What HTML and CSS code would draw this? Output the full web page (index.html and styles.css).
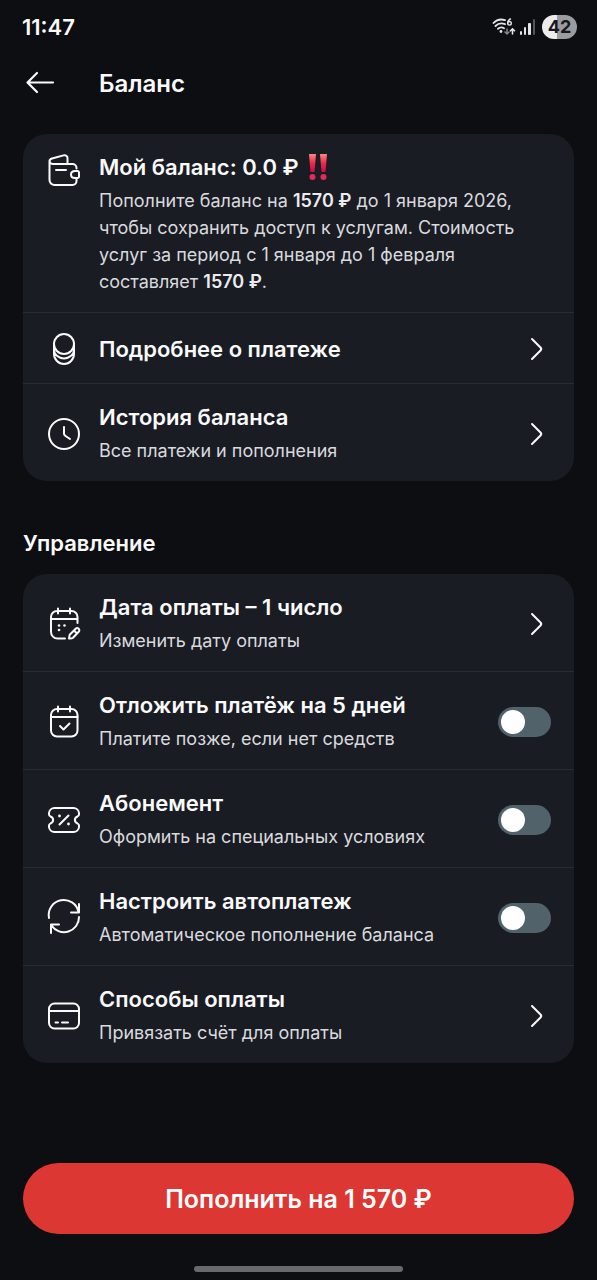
FILE: index.html
```html
<!DOCTYPE html>
<html lang="ru">
<head>
<meta charset="utf-8">
<meta name="viewport" content="width=device-width, initial-scale=1">
<title>Баланс</title>
<link rel="stylesheet" href="styles.css">
</head>
<body>
<div class="screen">
  <div class="status">
    <span class="clock">11:47</span>
    <div class="indicators">
      <svg width="24" height="20" viewBox="0 0 24 20" fill="none" stroke="#e4e5e9" stroke-linecap="round" aria-hidden="true">
        <path d="M1.500 6C4.500 2.800 9 1.800 13 3.200M3.500 9c2.500-2.500 6-3.200 9.500-1.800M6 11.800c1.800-1.500 4-1.700 6-.6" stroke-width="1.800"/>
        <circle cx="9" cy="14.500" r="1.400" fill="#e4e5e9" stroke="none"/>
        <path d="M18.500 2c-2 .6-2.800 2.200-2.800 4" stroke-width="1.400"/>
        <circle cx="17.500" cy="6.300" r="1.800" stroke-width="1.400"/>
        <path d="M15 12v5M13 15l2 2 2-2" stroke="#85868b" stroke-width="1.500"/>
        <path d="M20.500 17v-5M18.500 13.800l2-2 2 2" stroke-width="1.600"/>
      </svg>
      <svg width="18" height="18" viewBox="0 0 18 18" aria-hidden="true">
        <rect x="0" y="13" width="2" height="4" rx="1" fill="#e4e5e9"/>
        <rect x="4" y="9" width="2" height="8" rx="1" fill="#e4e5e9"/>
        <rect x="8" y="5" width="3" height="12" rx="1" fill="#e4e5e9"/>
        <rect x="13" y="1" width="2" height="16" rx="1" fill="#55565b"/>
      </svg>
      <span class="battery">42</span>
    </div>
  </div>

  <header class="appbar">
    <button class="back" type="button" aria-label="Назад">
      <svg width="30" height="24" viewBox="0 0 30 24" fill="none" stroke="#fafafb" stroke-width="2.200" stroke-linecap="round" stroke-linejoin="round"><path d="M28 11.500H3M12 2L2.500 11.500l9.500 9.500"/></svg>
    </button>
    <h1 class="title">Баланс</h1>
  </header>

  <main class="content">
    <section class="card" aria-label="Баланс">
      <div class="row row-top">
        <svg class="icon" viewBox="0 0 32 32"><path d="M28.500 14.500V14a4 4 0 0 0-4-4H5a3.500 3.500 0 0 1-3.500-3.500M1.500 7.500V26a5 5 0 0 0 5 5h18a4 4 0 0 0 4-4v-2.500M1.500 7.500c0-1.500.8-2.500 2.500-3L15.500 1.400c2.200-.6 4 .6 4 2.600V10M8 16h10M27 17h2.500a1.500 1.500 0 0 1 1.500 1.500v4a1.500 1.500 0 0 1-1.500 1.500H27c-2.500 0-4-1.500-4-3.500s1.500-3.500 4-3.500z"/></svg>
        <div class="text">
          <h2 class="name">Мой баланс: 0.0 ₽
            <svg class="alert" width="20" height="28" viewBox="0 0 20 28" role="img" aria-label="Важно">
              <defs><linearGradient id="red" x1="0" y1="0" x2="0" y2="1"><stop offset="0" stop-color="#ff8580"/><stop offset="0.500" stop-color="#e92c4c"/><stop offset="1" stop-color="#d1064b"/></linearGradient></defs>
              <path fill="url(#red)" d="M1 1h7L6.500 19h-4zM12 1h7l-1.500 18h-4z"/>
              <circle cx="4.500" cy="24" r="3" fill="#e62a5a"/><circle cx="15.500" cy="24" r="3" fill="#e62a5a"/>
            </svg>
          </h2>
          <p class="note">Пополните баланс на <b>1570 ₽</b> до 1 января 2026, чтобы сохранить доступ к услугам. Стоимость услуг за период с 1 января до 1 февраля составляет <b>1570 ₽</b>.</p>
        </div>
      </div>
      <a class="row" href="#payment">
        <svg class="icon" viewBox="0 0 32 32"><circle cx="16" cy="11" r="10"/><path d="M6 11v10a10 10 0 0 0 20 0V11M6 16.500a10 9 0 0 0 20 0"/></svg>
        <span class="text"><span class="name">Подробнее о платеже</span></span>
        <svg class="chevron" viewBox="0 0 14 24"><path d="M2 2l8.500 8.500c1 1 1 2 0 3L2 22"/></svg>
      </a>
      <a class="row" href="#history">
        <svg class="icon" viewBox="0 0 32 32"><circle cx="16" cy="16" r="15"/><path d="M16 9v6.500c0 1 .4 1.700 1.200 2.200L22 21"/></svg>
        <span class="text"><span class="name">История баланса</span><span class="note">Все платежи и пополнения</span></span>
        <svg class="chevron" viewBox="0 0 14 24"><path d="M2 2l8.500 8.500c1 1 1 2 0 3L2 22"/></svg>
      </a>
    </section>

    <h2 class="section">Управление</h2>

    <section class="card" aria-label="Управление">
      <a class="row" href="#date">
        <svg class="icon" viewBox="0 0 32 32"><path d="M29.500 15V9a6 6 0 0 0-6-6H9a6 6 0 0 0-6 6v15a6.500 6.500 0 0 0 6.500 6.500H17M3 11h26.500M10 .5v5M22 .5v5M21 30.500l.7-3.800 6-6a2.100 2.100 0 0 1 3 3l-5.700 6c-.8.7-2 .9-4 .8zM26 22.500l2.500 2.500"/><g class="dots"><circle cx="11" cy="17.500" r="1.300"/><circle cx="16.500" cy="17.500" r="1.300"/><circle cx="11" cy="22" r="1.300"/></g></svg>
        <span class="text"><span class="name">Дата оплаты – 1 число</span><span class="note">Изменить дату оплаты</span></span>
        <svg class="chevron" viewBox="0 0 14 24"><path d="M2 2l8.500 8.500c1 1 1 2 0 3L2 22"/></svg>
      </a>
      <label class="row">
        <svg class="icon" viewBox="0 0 32 32"><rect x="3" y="3" width="26.500" height="27.500" rx="6"/><path d="M3 11h26.500M10 .5v5M22 .5v5M12 20l3.500 3.500 6-6"/></svg>
        <span class="text"><span class="name">Отложить платёж на 5 дней</span><span class="note">Платите позже, если нет средств</span></span>
        <input class="switch" type="checkbox" role="switch">
      </label>
      <label class="row">
        <svg class="icon" viewBox="0 0 32 32"><path d="M6.500 4h19A5.500 5.500 0 0 1 31 9v1.500c0 1-.6 1.500-1.500 2-3.500 1.500-3.500 5.500 0 7 .9.500 1.500 1 1.500 2V23a5.500 5.500 0 0 1-5.500 5h-19A5.500 5.500 0 0 1 1 23v-1.500c0-1 .6-1.500 1.500-2 3.500-1.500 3.500-5.500 0-7C1.600 12 1 11.500 1 10.500V9a5.500 5.500 0 0 1 5.500-5zM11.500 20.500l9-9"/><g class="dots"><circle cx="11.500" cy="12" r="1.400"/><circle cx="20.500" cy="20" r="1.400"/></g></svg>
        <span class="text"><span class="name">Абонемент</span><span class="note">Оформить на специальных условиях</span></span>
        <input class="switch" type="checkbox" role="switch">
      </label>
      <label class="row">
        <svg class="icon" viewBox="0 0 32 32"><path d="M1 16A15 15 0 0 1 30.500 10M31 2v8.500h-8M31 15A15 15 0 0 1 3.500 23.500M3 31v-8.500h8"/></svg>
        <span class="text"><span class="name">Настроить автоплатеж</span><span class="note">Автоматическое пополнение баланса</span></span>
        <input class="switch" type="checkbox" role="switch">
      </label>
      <a class="row" href="#methods">
        <svg class="icon" viewBox="0 0 32 32"><rect x="1" y="3.500" width="30" height="25" rx="5.500"/><path d="M1 11h30M7.500 22.500h2.500M14 22.500h6"/></svg>
        <span class="text"><span class="name">Способы оплаты</span><span class="note">Привязать счёт для оплаты</span></span>
        <svg class="chevron" viewBox="0 0 14 24"><path d="M2 2l8.500 8.500c1 1 1 2 0 3L2 22"/></svg>
      </a>
    </section>
  </main>

  <footer class="bottom">
    <button class="pay" type="button">Пополнить на 1 570 ₽</button>
    <div class="handle"></div>
  </footer>
</div>
</body>
</html>
```
FILE: styles.css
```css
* { box-sizing: border-box; }

body {
  margin: 0;
  background: #0d0e12;
  color: #fafafb;
  font-family: Inter, "Noto Sans", sans-serif;
}

.screen {
  min-height: 100vh;
  display: flex;
  flex-direction: column;
}

h1, h2, p { margin: 0; }

.status {
  height: 54px;
  padding: 0 20px 0 22px;
  display: flex;
  align-items: center;
  justify-content: space-between;
}

.clock { font-size: 22px; font-weight: 600; }

.indicators { display: flex; align-items: center; gap: 4px; }

.battery {
  width: 35px;
  height: 24px;
  border-radius: 12px;
  background: linear-gradient(90deg, #ececee 42%, #9b9ca0 42%);
  color: #17181c;
  font-size: 18px;
  font-weight: 700;
  line-height: 24px;
  text-align: center;
}

.appbar {
  height: 58px;
  padding: 0 24px;
  display: flex;
  align-items: center;
  gap: 43px;
}

.back {
  width: 32px;
  height: 32px;
  padding: 0;
  border: 0;
  background: none;
  display: flex;
  align-items: center;
  justify-content: center;
}

.title { font-size: 24px; font-weight: 600; }

.content { padding: 22px 23px 0; }

.card {
  border-radius: 24px;
  background: #191c23;
  overflow: hidden;
}

.row {
  display: flex;
  align-items: center;
  gap: 19px;
  padding: 19px 23px 17px 25px;
  color: inherit;
  text-decoration: none;
}

.row + .row { border-top: 1px solid #272b32; }

.row-top { align-items: flex-start; }

.icon {
  width: 32px;
  height: 34px;
  flex: none;
  overflow: visible;
  fill: none;
  stroke: #fafafb;
  stroke-width: 2;
  stroke-linecap: round;
  stroke-linejoin: round;
}

.dots { fill: #fafafb; stroke: none; }

.text {
  flex: 1;
  min-width: 0;
  display: flex;
  flex-direction: column;
  gap: 6px;
}

.name { font-size: 22px; font-weight: 600; line-height: 28px; }

.alert { margin-left: 3px; vertical-align: middle; }

.row-top .name { display: flex; align-items: center; gap: 6px; }

.note { color: #d9dade; font-size: 18px; line-height: 27px; }

.note b { font-weight: 600; color: #ececef; }

.chevron {
  width: 14px;
  height: 24px;
  margin-right: 7px;
  flex: none;
  fill: none;
  stroke: #fafafb;
  stroke-width: 2;
  stroke-linecap: round;
}

.switch {
  appearance: none;
  width: 53px;
  height: 30px;
  margin: 0;
  padding: 3px;
  flex: none;
  border-radius: 15px;
  background: #52626a;
}

.switch::before {
  content: "";
  display: block;
  width: 24px;
  height: 24px;
  border-radius: 50%;
  background: #fff;
}

.switch:checked { background: #dd3733; }

.switch:checked::before { margin-left: auto; }

.section {
  padding: 46px 0 15px;
  font-size: 22px;
  font-weight: 600;
  line-height: 32px;
}

.bottom {
  margin-top: auto;
  padding: 23px 23px 8px;
}

.pay {
  display: block;
  width: 100%;
  height: 71px;
  border: 0;
  border-radius: 36px;
  background: #dd3733;
  color: #fff;
  font-family: inherit;
  font-size: 25px;
  font-weight: 600;
}

.handle {
  width: 38%;
  height: 6px;
  margin: 32px auto 0;
  border-radius: 3px;
  background: #68696e;
}
```
